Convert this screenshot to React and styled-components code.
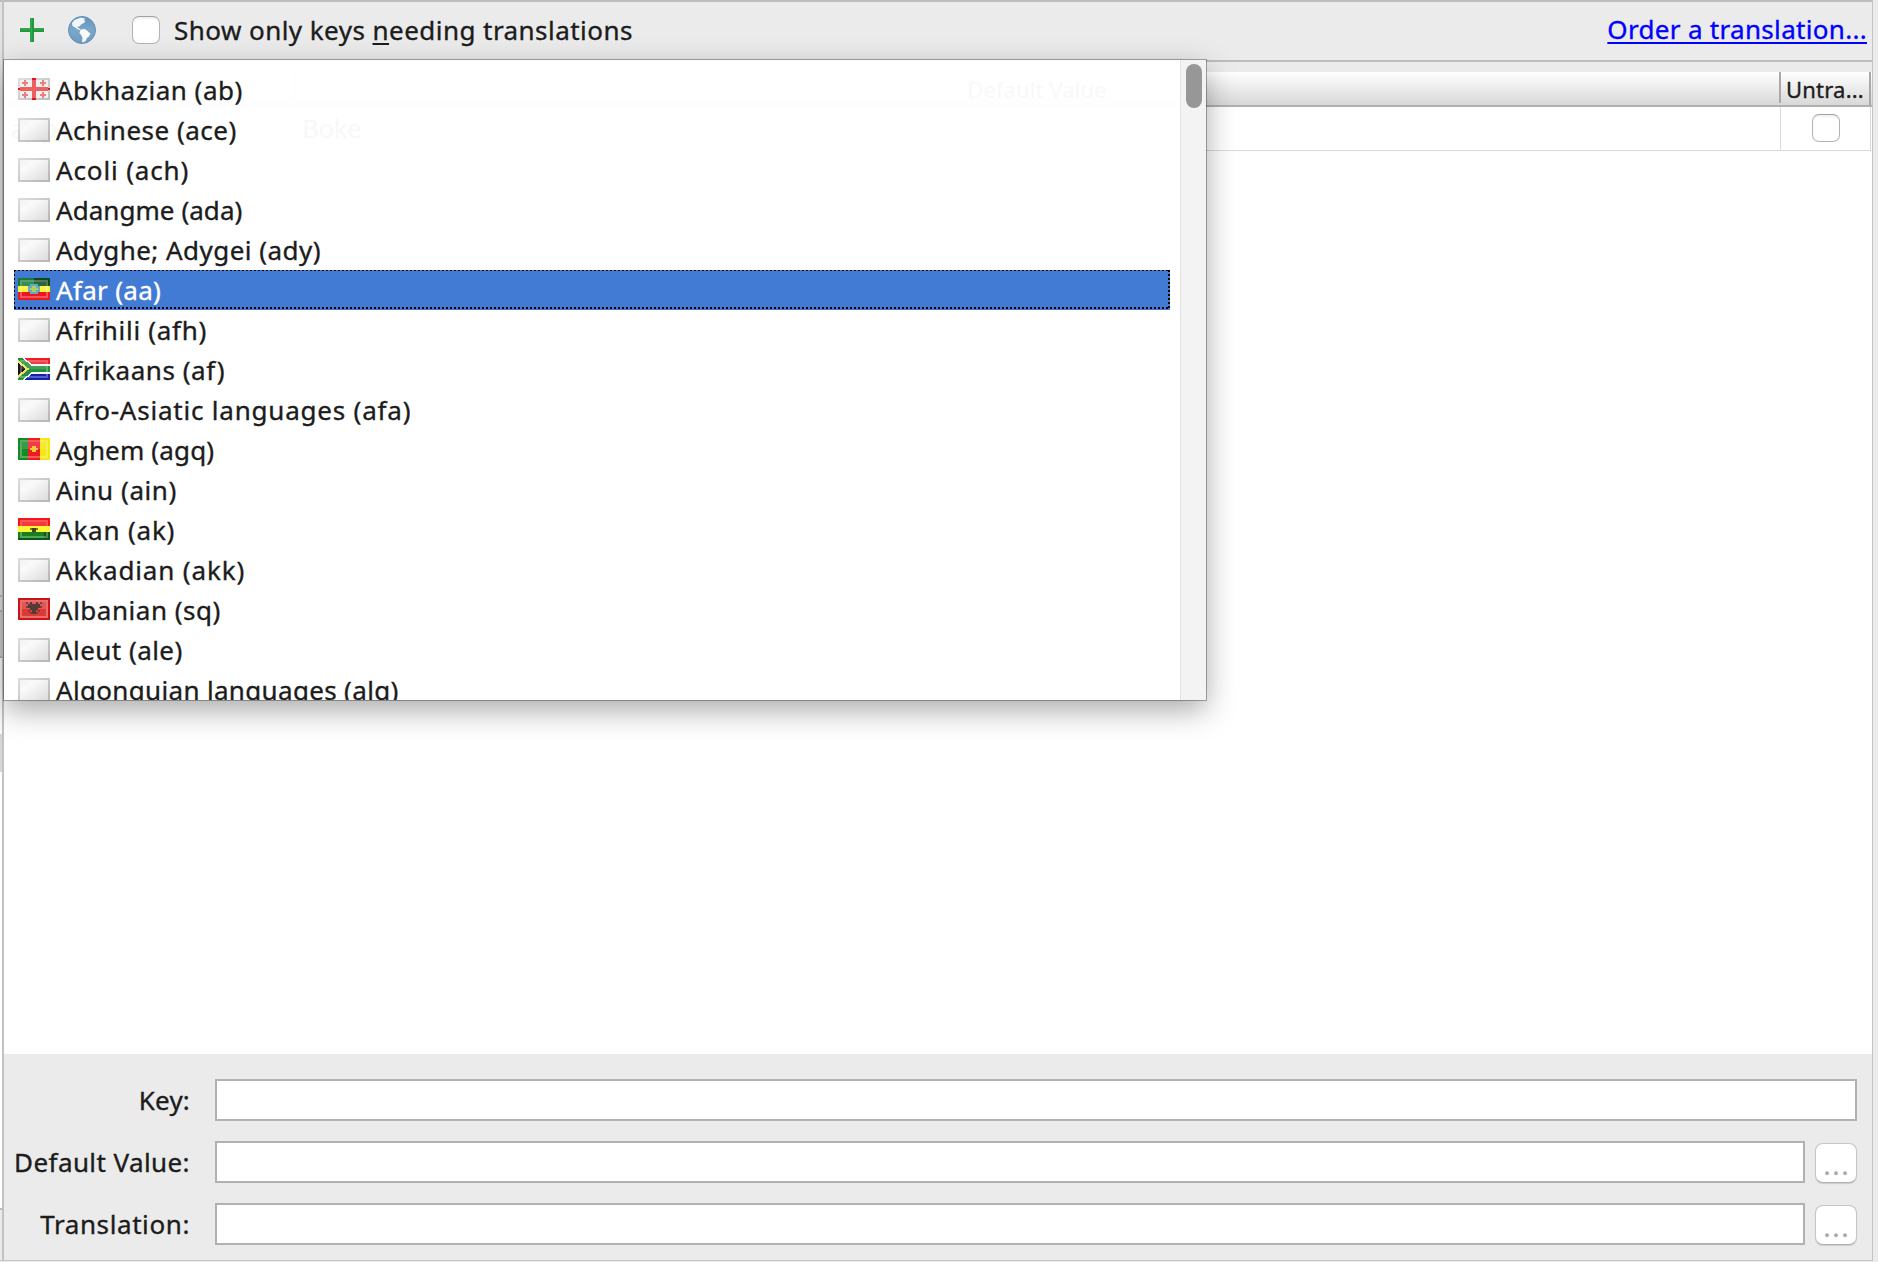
import React from "react";
import styled, { createGlobalStyle, css } from "styled-components";

const GlobalStyle = createGlobalStyle`
  * { box-sizing: border-box; }
  html, body { margin: 0; padding: 0; overflow: hidden; }
  body {
    background: #ebebeb;
    color: #1c1c1c;
    font-family: "Noto Sans", "Open Sans", sans-serif;
    font-size: 26px;
    -webkit-text-stroke: 0.35px currentColor;
  }
`;

/* Window frame */

const Frame = styled.div`
  display: flex;
  width: 1878px;
  height: 1262px;
  position: relative;
`;

const Sidebar = styled.div`
  display: flex;
  flex-direction: column;
  width: 2px;
`;

const SidebarStrip = styled.div`
  flex: none;
  height: ${(p) => p.$h}px;
  background: ${(p) => p.$color};
`;

const Editor = styled.main`
  display: flex;
  flex-direction: column;
  width: 1871px;
  height: 1261px;
  border-left: 2px solid #c2c2c2;
  border-right: 1px solid #c4c4c4;
  border-bottom: 1px solid #c4c4c4;
`;

/* Toolbar */

const Toolbar = styled.header`
  display: flex;
  align-items: center;
  flex: none;
  height: 62px;
  padding: 0 5px 2px 16px;
  border-top: 2px solid #bdbdbd;
  border-bottom: 2px solid #bdbdbd;
`;

const ToolIcon = styled.svg`
  flex: none;
  display: block;
  width: ${(p) => p.$size}px;
  height: ${(p) => p.$size}px;
  margin-right: ${(p) => p.$gap}px;
`;

const Checkbox = styled.span`
  flex: none;
  width: 28px;
  height: 28px;
  border: 1px solid #b4b4b4;
  border-top-color: #a2a2a2;
  border-radius: 7px;
  background: #fff;
  box-shadow: inset 0 2px 2px rgba(0, 0, 0, 0.06);
`;

const Label = styled.span`
  letter-spacing: ${(p) => p.$track}px;
  white-space: nowrap;
`;

const FilterLabel = styled(Label)`
  margin-left: 14px;
`;

const Mnemonic = styled.span`
  text-decoration: underline;
  text-decoration-thickness: 2px;
  text-underline-offset: 3px;
  text-decoration-skip-ink: none;
`;

const OrderLink = styled.a`
  margin-left: auto;
  margin-top: -3px;
  color: #0000ff;
  letter-spacing: 0.31px;
  text-decoration: underline;
  text-decoration-thickness: 2px;
  text-underline-offset: 3px;
  text-decoration-skip-ink: none;
`;

/* Table of keys */

const Table = styled.section`
  display: flex;
  flex-direction: column;
  flex: 1;
  padding-top: 10px;
`;

const columns = css`
  display: grid;
  grid-template-columns: 291px 1486px 90px;
`;

const HeaderRow = styled.div`
  ${columns}
  flex: none;
  height: 35px;
  border-bottom: 2px solid #b0b0b0;
  background: linear-gradient(#ffffff, #d8d8d8);
  font-size: 22px;
  line-height: 34px;
`;

const HeaderCell = styled.div`
  height: ${(p) => (p.$last ? 33 : 31)}px;
  border-right: 2px solid #a9a9a9;
  text-align: center;
  letter-spacing: ${(p) => p.$track}px;
  white-space: nowrap;
`;

const TableBody = styled.div`
  flex: 1;
  background: #fff;
`;

const TableRow = styled.div`
  ${columns}
  height: 44px;
  margin-right: 1px;
  border-bottom: 1px solid #dadada;
`;

const Cell = styled.div`
  display: flex;
  align-items: center;
  justify-content: ${(p) => (p.$center ? "center" : "flex-start")};
  padding: ${(p) => (p.$center ? "0 0 2px 1px" : "0 7px 2px")};
  border-right: 1px solid #dadada;
`;

/* Detail form */

const Form = styled.form`
  display: grid;
  grid-template-columns: 186px 1fr;
  column-gap: 25px;
  row-gap: 20px;
  align-content: start;
  flex: none;
  height: 206px;
  padding: 25px 15px 0 0;
`;

const FieldLabel = styled.label`
  line-height: 42px;
  text-align: right;
  letter-spacing: ${(p) => p.$track}px;
  white-space: nowrap;
`;

const FieldControls = styled.div`
  display: flex;
  gap: 10px;
`;

const TextField = styled.input`
  flex: 1;
  min-width: 0;
  height: 42px;
  padding: 0 8px;
  border: 2px solid #b1b1b1;
  border-radius: 0;
  background: #fff;
  font: inherit;
  outline: none;
`;

const MoreButton = styled.button`
  flex: none;
  width: 42px;
  height: 40px;
  margin-top: 2px;
  padding: 0 0 0 2px;
  border: 1px solid #c6c6c6;
  border-bottom-color: #b0b0b0;
  border-radius: 8px;
  background: #fff;
  box-shadow: 0 1px 1px rgba(0, 0, 0, 0.14);
  color: #a6a6a6;
  font: inherit;
  letter-spacing: 2px;
  line-height: 42px;
`;

/* Locale popup */

const Popup = styled.div`
  position: absolute;
  left: 4px;
  top: 60px;
  display: flex;
  width: 1202px;
  height: 640px;
  background: rgba(255, 255, 255, 0.972);
  box-shadow: 0 0 0 1px rgba(0, 0, 0, 0.3), 0 10px 28px rgba(0, 0, 0, 0.34);
`;

const LocaleList = styled.ul`
  flex: 1;
  margin: 0;
  padding: 10px 10px 0;
  list-style: none;
  overflow: hidden;
`;

const LocaleItem = styled.li`
  display: flex;
  height: 40px;
  padding-left: 4px;
  line-height: 41px;
  letter-spacing: ${(p) => p.$track}px;
  white-space: nowrap;
  ${(p) =>
    p.$selected &&
    css`
      color: #fff;
      background:
        repeating-linear-gradient(90deg, #000 0 2px, transparent 2px 4px) 0 0 / 100% 1px no-repeat,
        repeating-linear-gradient(90deg, #000 0 2px, transparent 2px 4px) 0 37px / 100% 2px no-repeat,
        repeating-linear-gradient(#000 0 2px, transparent 2px 4px) 0 0 / 1px 39px no-repeat,
        repeating-linear-gradient(#000 0 2px, transparent 2px 4px) 100% 0 / 2px 39px no-repeat,
        #427bd4;
    `}
`;

const FlagIcon = styled.svg`
  flex: none;
  display: block;
  width: 32px;
  height: ${(p) => p.$h}px;
  margin: 8px 6px 0 0;
`;

const ScrollTrack = styled.div`
  width: 26px;
  padding: 4px 0 0 5px;
  border-left: 1px solid #e2e2e2;
  background: rgba(242, 242, 242, 0.96);
`;

const ScrollThumb = styled.div`
  width: 16px;
  height: 44px;
  border-radius: 8px;
  background: #979797;
`;

/* Flags are drawn on a 16-unit grid, two pixels per unit */

const Gloss = () => (
  <>
    <rect x="1.5" y="1.5" width="13" height="8" fill="none" stroke="#fff" strokeOpacity=".28" />
    <rect x="2" y="2" width="12" height="3.5" fill="#fff" fillOpacity=".15" />
  </>
);

const BlankFlag = () => (
  <FlagIcon $h={24} viewBox="0 0 16 12">
    <defs>
      <linearGradient id="blank" x1="0" y1="0" x2="1" y2="1">
        <stop offset="0" stopColor="#f4f4f6" />
        <stop offset=".3" stopColor="#fafafb" />
        <stop offset="1" stopColor="#dcdcdd" />
      </linearGradient>
      <linearGradient id="blankEdge" x1="0" y1="0" x2="1" y2="1">
        <stop offset="0" stopColor="#dedede" />
        <stop offset="1" stopColor="#b4b4b4" />
      </linearGradient>
    </defs>
    <rect width="16" height="12" fill="url(#blankEdge)" />
    <rect x="1" y="1" width="14" height="10" fill="url(#blank)" />
  </FlagIcon>
);

const flags = {
  georgia: (
    <>
      <defs>
        <linearGradient id="geo" x1="0" y1="0" x2="1" y2="1">
          <stop offset="0" stopColor="#e0e0e0" />
          <stop offset="1" stopColor="#bcbcbc" />
        </linearGradient>
      </defs>
      <rect width="16" height="11" fill="url(#geo)" />
      <rect x="1" y="1" width="14" height="9" fill="#f1f0f0" />
      <path d="M0 5h16v1H0zM7 0h2v11H7z" fill="#e3161c" />
      <path d="M1 4.500h14v2H1zM7 1h2v9H7z" fill="#ee5f5f" />
      <path d="M3 1h1v1h1v1H4v1H3V3H2V2h1zM12 1h1v1h1v1h-1v1h-1V3h-1V2h1zM3 7h1v1h1v1H4v1H3V9H2V8h1zM12 7h1v1h1v1h-1v1h-1V9h-1V8h1z" fill="#e88080" />
    </>
  ),
  ethiopia: (
    <>
      <rect width="16" height="4" fill="#0a4a1b" />
      <rect width="8" height="4" fill="#147a35" />
      <rect y="4" width="16" height="3" fill="#fdf335" />
      <rect y="7" width="16" height="4" fill="#ee151c" />
      <Gloss />
      <path d="M6 3h4v1h1v3h-1v1H6V7H5V4h1z" fill="#63acc4" />
      <path d="M7 4h2v1h1v1H9v1H7V6H6V5h1z" fill="#b0cf62" />
    </>
  ),
  southAfrica: (
    <>
      <rect width="16" height="11" fill="#f4f4f4" />
      <path d="M3 0h13v3H7z" fill="#ee1c25" />
      <path d="M7 8h9v3H3z" fill="#1421ae" />
      <path d="M0 0h2l5 4h9v3H7l-5 4H0z" fill="#22913a" />
      <path d="M0 1l5.6 4.5L0 10z" fill="#f1dd62" />
      <path d="M0 2.500l4 3-4 3z" fill="#1a1712" />
      <Gloss />
    </>
  ),
  cameroon: (
    <>
      <rect width="5" height="11" fill="#168a25" />
      <rect x="5" width="6" height="11" fill="#ee1b22" />
      <rect x="11" width="5" height="11" fill="#f2e70e" />
      <Gloss />
      <path d="M7 4h2v1h1v1H9v1H7V6H6V5h1z" fill="#f7c840" />
    </>
  ),
  ghana: (
    <>
      <rect width="16" height="4" fill="#f5141c" />
      <rect y="7" width="16" height="4" fill="#0c5914" />
      <rect y="7" width="13" height="3" fill="#168021" />
      <Gloss />
      <rect y="4" width="16" height="3" fill="#fbf636" />
      <path d="M7 5h2v2H7z" fill="#4b431c" />
      <path d="M6 5h4v1H6z" fill="#4b431c" fillOpacity=".7" />
    </>
  ),
  albania: (
    <>
      <rect width="16" height="11" fill="#cd1219" />
      <rect x="1" y="1" width="14" height="9" fill="#dc3a36" />
      <Gloss />
      <path d="M6 2h1v1h2V2h1v1h1v2h-1v1H9v2H7V6H6V5H5V3h1z" fill="#553a38" />
      <path d="M4 2h1v1H4zM11 2h1v1h-1zM4 4h1v1H4zM11 4h1v1h-1zM5 6h1v1H5zM10 6h1v1h-1zM6 7h1v1H6zM9 7h1v1H9z" fill="#7d3f3b" />
    </>
  ),
};

const Flag = ({ name }) =>
  name ? (
    <FlagIcon $h={22} viewBox="0 0 16 11" shapeRendering="crispEdges">
      {flags[name]}
    </FlagIcon>
  ) : (
    <BlankFlag />
  );

const locales = [
  { label: "Abkhazian (ab)", flag: "georgia", track: 0.51 },
  { label: "Achinese (ace)", track: 0.5 },
  { label: "Acoli (ach)", track: 0.86 },
  { label: "Adangme (ada)", track: 0.05 },
  { label: "Adyghe; Adygei (ady)", track: 0.46 },
  { label: "Afar (aa)", flag: "ethiopia", track: 0.3, selected: true },
  { label: "Afrihili (afh)", track: 0.7 },
  { label: "Afrikaans (af)", flag: "southAfrica", track: 0.54 },
  { label: "Afro-Asiatic languages (afa)", track: 0.79 },
  { label: "Aghem (agq)", flag: "cameroon", track: 0.15 },
  { label: "Ainu (ain)", track: 0.57 },
  { label: "Akan (ak)", flag: "ghana", track: 0.8 },
  { label: "Akkadian (akk)", track: 0.86 },
  { label: "Albanian (sq)", flag: "albania", track: 0.52 },
  { label: "Aleut (ale)", track: 0.45 },
  { label: "Algonquian languages (alg)", track: 0.33 },
];

const fields = [
  { label: "Key:", track: 0.17 },
  { label: "Default Value:", track: 0.41, more: true },
  { label: "Translation:", track: 0.6, more: true },
];

const sidebarStrips = [
  [2, "#bdbdbd"],
  [593, "#e2e2e2"],
  [2, "#b8b8b8"],
  [13, "#e0e0e0"],
  [2, "#b0b0b0"],
  [44, "#cccccc"],
  [2, "#b0b0b0"],
  [76, "#fafafa"],
  [38, "#d6d6d6"],
  [436, "#ffffff"],
  [2, "#bdbdbd"],
  [50, "#ebebeb"],
  [1, "#c4c4c4"],
];

const PlusIcon = () => (
  <ToolIcon $size={24} $gap={24} viewBox="0 0 24 24">
    <path d="M10 0h4v10h10v4H14v10h-4V14H0v-4h10z" fill="#2aa84a" />
    <path d="M0 12h10v2H0zM14 12h10v2H14zM12 0h2v24h-2z" fill="#1d8a38" fillOpacity=".55" />
  </ToolIcon>
);

const GlobeIcon = () => (
  <ToolIcon $size={28} $gap={36} viewBox="0 0 28 28">
    <defs>
      <linearGradient id="sea" x1="0" y1="0" x2="0" y2="1">
        <stop offset="0" stopColor="#5f93bb" />
        <stop offset=".5" stopColor="#7ba7c9" />
        <stop offset="1" stopColor="#6d9cc1" />
      </linearGradient>
    </defs>
    <circle cx="14" cy="14" r="13.500" fill="url(#sea)" stroke="#6390b5" />
    <path
      d="M9 3l4-1.500 4 1-1 2 1.500.5L16 7l-3 1.500-1.500 2H9.500L10 12l1.500.5 1 1.500-2-.3L7 11.500 4.500 10 4 7l2.500-3z"
      fill="#f3f6f8"
    />
    <path
      d="M12.500 13.500l4-.5 2.500 1.500 2 2 1.500 1L21 20.500 19 22l-1.500 3-2.500 1.500-1-.5.5-4-1-2.500-2-2.500z"
      fill="#f8fafb"
    />
  </ToolIcon>
);

export default function App() {
  return (
    <>
      <GlobalStyle />
      <Frame>
        <Sidebar>
          {sidebarStrips.map(([h, color], i) => (
            <SidebarStrip key={i} $h={h} $color={color} />
          ))}
        </Sidebar>
        <Editor>
          <Toolbar>
            <PlusIcon />
            <GlobeIcon />
            <Checkbox />
            <FilterLabel $track={0.45}>
              Show only keys <Mnemonic>n</Mnemonic>eeding translations
            </FilterLabel>
            <OrderLink>Order a translation...</OrderLink>
          </Toolbar>
          <Table>
            <HeaderRow>
              <HeaderCell>Key</HeaderCell>
              <HeaderCell $track={0.11}>Default Value</HeaderCell>
              <HeaderCell $track={0.2} $last>
                Untra...
              </HeaderCell>
            </HeaderRow>
            <TableBody>
              <TableRow>
                <Cell>app_name</Cell>
                <Cell>
                  <Label $track={-0.5}>Boke</Label>
                </Cell>
                <Cell $center>
                  <Checkbox />
                </Cell>
              </TableRow>
            </TableBody>
          </Table>
          <Form>
            {fields.map((f) => (
              <React.Fragment key={f.label}>
                <FieldLabel $track={f.track}>{f.label}</FieldLabel>
                <FieldControls>
                  <TextField aria-label={f.label} />
                  {f.more && <MoreButton type="button">...</MoreButton>}
                </FieldControls>
              </React.Fragment>
            ))}
          </Form>
        </Editor>
        <Popup>
          <LocaleList>
            {locales.map((l) => (
              <LocaleItem key={l.label} $track={l.track} $selected={l.selected}>
                <Flag name={l.flag} />
                {l.label}
              </LocaleItem>
            ))}
          </LocaleList>
          <ScrollTrack>
            <ScrollThumb />
          </ScrollTrack>
        </Popup>
      </Frame>
    </>
  );
}
